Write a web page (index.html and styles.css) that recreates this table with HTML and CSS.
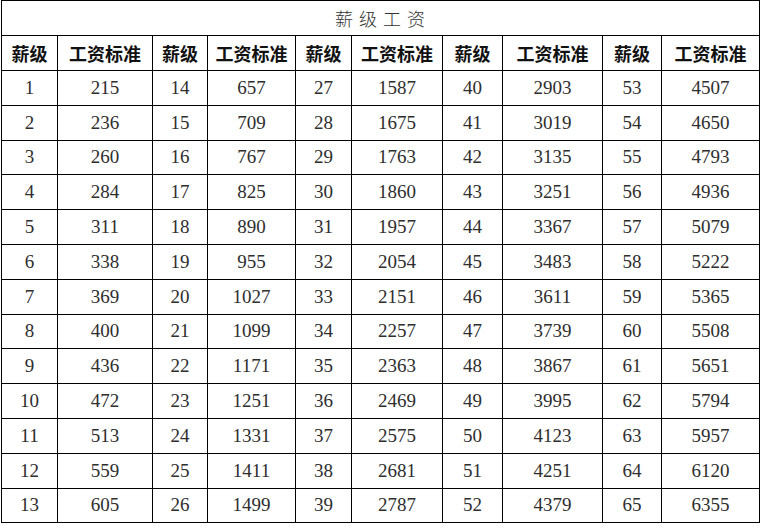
FILE: index.html
```html
<!DOCTYPE html>
<html lang="zh">
<head>
<meta charset="utf-8">
<link rel="stylesheet" href="styles.css">
</head>
<body>
<table class="pay">
<colgroup>
<col class="c1"><col class="c2"><col class="c3"><col class="c4"><col class="c5"><col class="c6"><col class="c7"><col class="c8"><col class="c9"><col class="c10">
</colgroup>
<tr class="title"><td colspan="10">薪 级 工 资</td></tr>
<tr class="head"><th>薪级</th><th>工资标准</th><th>薪级</th><th>工资标准</th><th>薪级</th><th>工资标准</th><th>薪级</th><th>工资标准</th><th>薪级</th><th>工资标准</th></tr>
<tr><td>1</td><td>215</td><td>14</td><td>657</td><td>27</td><td>1587</td><td>40</td><td>2903</td><td>53</td><td>4507</td></tr>
<tr><td>2</td><td>236</td><td>15</td><td>709</td><td>28</td><td>1675</td><td>41</td><td>3019</td><td>54</td><td>4650</td></tr>
<tr><td>3</td><td>260</td><td>16</td><td>767</td><td>29</td><td>1763</td><td>42</td><td>3135</td><td>55</td><td>4793</td></tr>
<tr><td>4</td><td>284</td><td>17</td><td>825</td><td>30</td><td>1860</td><td>43</td><td>3251</td><td>56</td><td>4936</td></tr>
<tr><td>5</td><td>311</td><td>18</td><td>890</td><td>31</td><td>1957</td><td>44</td><td>3367</td><td>57</td><td>5079</td></tr>
<tr><td>6</td><td>338</td><td>19</td><td>955</td><td>32</td><td>2054</td><td>45</td><td>3483</td><td>58</td><td>5222</td></tr>
<tr><td>7</td><td>369</td><td>20</td><td>1027</td><td>33</td><td>2151</td><td>46</td><td>3611</td><td>59</td><td>5365</td></tr>
<tr><td>8</td><td>400</td><td>21</td><td>1099</td><td>34</td><td>2257</td><td>47</td><td>3739</td><td>60</td><td>5508</td></tr>
<tr><td>9</td><td>436</td><td>22</td><td>1171</td><td>35</td><td>2363</td><td>48</td><td>3867</td><td>61</td><td>5651</td></tr>
<tr><td>10</td><td>472</td><td>23</td><td>1251</td><td>36</td><td>2469</td><td>49</td><td>3995</td><td>62</td><td>5794</td></tr>
<tr><td>11</td><td>513</td><td>24</td><td>1331</td><td>37</td><td>2575</td><td>50</td><td>4123</td><td>63</td><td>5957</td></tr>
<tr><td>12</td><td>559</td><td>25</td><td>1411</td><td>38</td><td>2681</td><td>51</td><td>4251</td><td>64</td><td>6120</td></tr>
<tr><td>13</td><td>605</td><td>26</td><td>1499</td><td>39</td><td>2787</td><td>52</td><td>4379</td><td>65</td><td>6355</td></tr>
</table>
</body>
</html>
```
FILE: styles.css
```css
html, body {
  margin: 0;
  padding: 0;
  background: #fff;
}
body {
  padding-left: 1px;
}
.pay {
  border-collapse: collapse;
  table-layout: fixed;
  width: 758px;
  font-family: "Liberation Serif", "Noto Sans CJK SC", serif;
  color: #2e2e2e;
}
.c1 { width: 56px; }
.c2 { width: 95px; }
.c3 { width: 55px; }
.c4 { width: 88px; }
.c5 { width: 56px; }
.c6 { width: 91px; }
.c7 { width: 60px; }
.c8 { width: 100px; }
.c9 { width: 59px; }
.c10 { width: 98px; }
.pay td, .pay th {
  border: 1px solid #000;
  padding: 0;
  text-align: center;
  vertical-align: middle;
}
.pay tr {
  height: 34.8px;
}
.pay td {
  font-size: 19px;
}
.pay .title {
  height: 35px;
}
.pay .title td {
  font-family: "Noto Sans CJK SC", sans-serif;
  font-size: 18px;
  font-weight: 300;
  color: #333;
  letter-spacing: 1px;
}
.pay .head {
  height: 35px;
}
.pay .head th {
  font-family: "Noto Sans CJK SC", sans-serif;
  font-size: 18px;
  font-weight: 700;
  color: #111;
}
```
